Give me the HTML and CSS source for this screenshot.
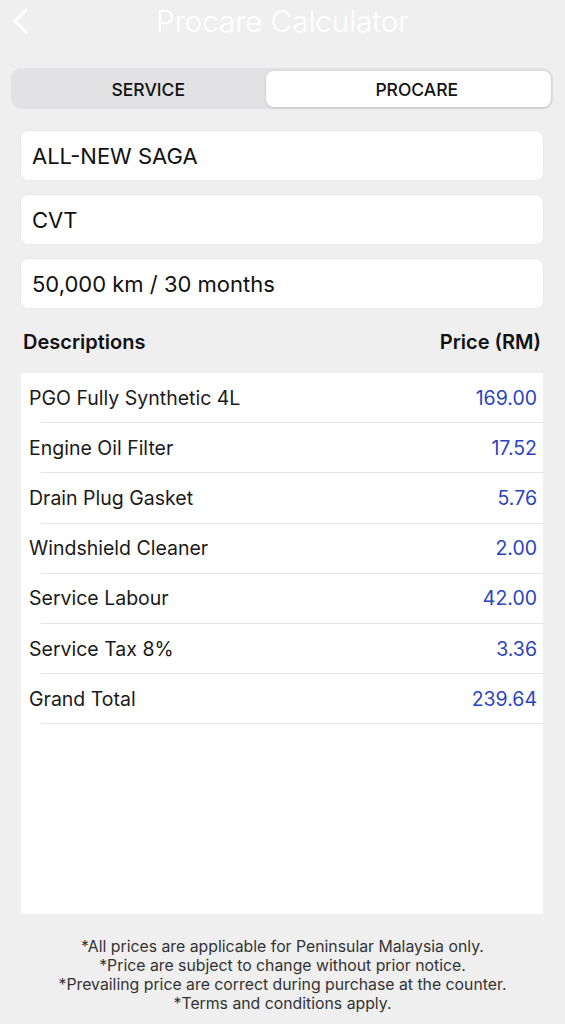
FILE: index.html
```html
<!DOCTYPE html>
<html lang="en">
<head>
    <meta charset="UTF-8">
    <meta name="viewport" content="width=device-width, initial-scale=1.0">
    <title>Procare Calculator</title>
    <link rel="stylesheet" href="styles.css">
</head>
<body>
    <div class="navbar">
        <svg class="back" width="20" height="32" viewBox="0 0 20 32">
            <path d="M15 5 L4 16 L15 27" fill="none" stroke="#fff" stroke-width="3" stroke-linecap="round" stroke-linejoin="round"/>
        </svg>
        <h1>Procare Calculator</h1>
    </div>

    <div class="segment">
        <div class="seg-item">SERVICE</div>
        <div class="seg-item active">PROCARE</div>
    </div>

    <div class="field">ALL-NEW SAGA</div>
    <div class="field">CVT</div>
    <div class="field">50,000 km / 30 months</div>

    <div class="table-head">
        <span>Descriptions</span>
        <span>Price (RM)</span>
    </div>

    <div class="card">
        <div class="row"><span>PGO Fully Synthetic 4L</span><span class="price">169.00</span></div>
        <div class="row"><span>Engine Oil Filter</span><span class="price">17.52</span></div>
        <div class="row"><span>Drain Plug Gasket</span><span class="price">5.76</span></div>
        <div class="row"><span>Windshield Cleaner</span><span class="price">2.00</span></div>
        <div class="row"><span>Service Labour</span><span class="price">42.00</span></div>
        <div class="row"><span>Service Tax 8%</span><span class="price">3.36</span></div>
        <div class="row"><span>Grand Total</span><span class="price">239.64</span></div>
    </div>

    <div class="notes">
        <p>*All prices are applicable for Peninsular Malaysia only.</p>
        <p>*Price are subject to change without prior notice.</p>
        <p>*Prevailing price are correct during purchase at the counter.</p>
        <p>*Terms and conditions apply.</p>
    </div>
</body>
</html>
```

FILE: styles.css
```css
body {
    font-family: 'Inter', 'Liberation Sans', sans-serif;
    background-color: #efefef;
    margin: 0;
    padding: 0;
    color: #111;
}
.navbar {
    position: relative;
    height: 42px;
    display: flex;
    align-items: center;
    justify-content: center;
}
.back {
    position: absolute;
    left: 11px;
    top: 5px;
}
h1 {
    margin: 0;
    font-size: 29.5px;
    font-weight: 300;
    color: #fff;
    line-height: 42px;
    margin-top: -1px;
}
.segment {
    display: flex;
    margin: 26px 12px 0 11px;
    height: 41px;
    padding: 3px 2px 2px 3px;
    box-sizing: border-box;
    background-color: #e2e2e4;
    border-radius: 11px;
}
.seg-item {
    flex: 1 1 0;
    display: flex;
    align-items: center;
    justify-content: center;
    font-size: 17.5px;
    font-weight: 500;
    color: #111;
    border-radius: 8px;
}
.seg-item.active {
    margin-left: -17px;
    padding-left: 17px;
    background-color: #fff;
    box-shadow: 0 1px 3px rgba(0, 0, 0, 0.15);
}
.field {
    margin: 0 22px 0 21px;
    height: 49px;
    background-color: #fff;
    border-radius: 7px;
    display: flex;
    align-items: center;
    padding-left: 11px;
    font-size: 22px;
    color: #111;
    box-shadow: 0 0 0 0.5px #e2e2e2;
}
.segment + .field {
    margin-top: 22px;
}
.field + .field {
    margin-top: 15px;
}
.table-head {
    display: flex;
    justify-content: space-between;
    margin: 22px 24px 0 23px;
    font-size: 20px;
    font-weight: 600;
    color: #111;
}
.card {
    margin: 19px 22px 0 21px;
    height: 541px;
    background-color: #fff;
}
.row {
    display: flex;
    justify-content: space-between;
    align-items: center;
    height: 49.2px;
    margin-left: 20px;
    border-bottom: 1px solid #e4e4e4;
    font-size: 19.5px;
    color: #1a1a1a;
}
.row span:first-child {
    margin-left: -12px;
}
.price {
    color: #2b44bd;
    padding-right: 6px;
}
.notes {
    margin-top: 23px;
    text-align: center;
    font-size: 15.8px;
    color: #333;
}
.notes p {
    margin: 0;
    line-height: 19px;
}
```
